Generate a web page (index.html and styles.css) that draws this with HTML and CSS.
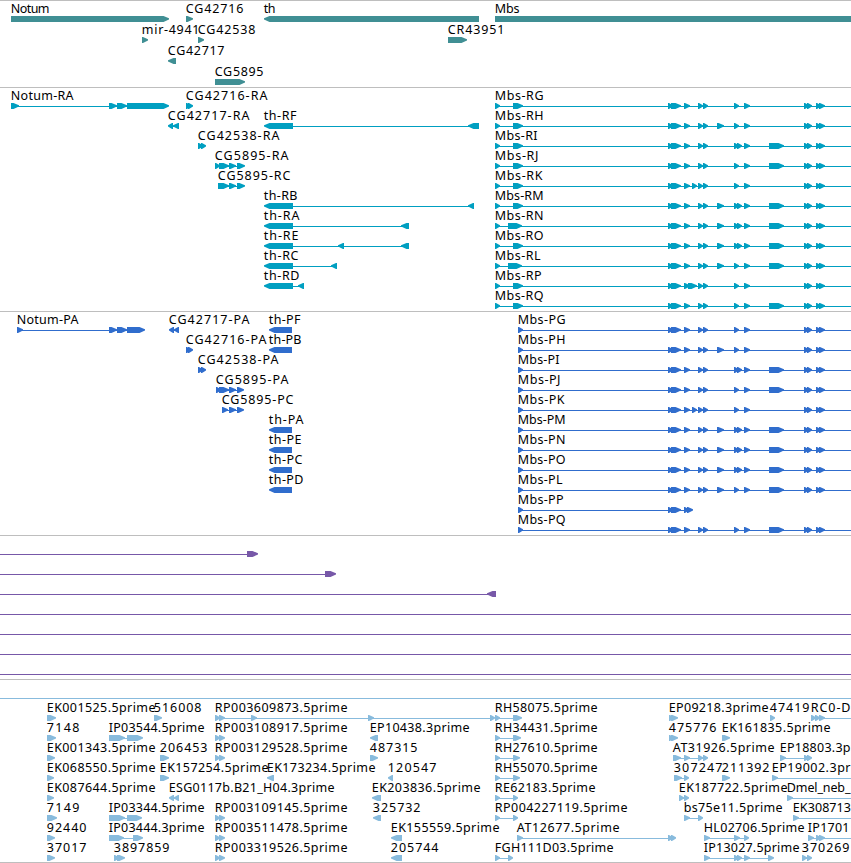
FILE: index.html
```html
<!DOCTYPE html>
<html lang="en">
<head>
<meta charset="utf-8">
<title>Genome browser</title>
<link rel="stylesheet" href="styles.css">
</head>
<body>
<main class="browser">
  <section class="track track-gene"><svg id="gene" class="canvas"></svg></section>
  <section class="track track-transcript"><svg id="transcript" class="canvas"></svg></section>
  <section class="track track-protein"><svg id="protein" class="canvas"></svg></section>
  <section class="track track-clone"><svg id="clone" class="canvas"></svg></section>
  <section class="track track-est"><svg id="est" class="canvas"></svg></section>
</main>
<script src="tracks.js"></script>
</body>
</html>
```
FILE: styles.css
```css
* {
  box-sizing: border-box;
}

body {
  margin: 0;
  background: #fff;
  overflow: hidden;
}

.browser {
  display: flex;
  flex-direction: column;
  width: 851px;
  height: 863px;
  border-bottom: 1px solid #bebebe;
}

.track {
  flex: none;
  border-top: 1px solid #bebebe;
  overflow: hidden;
}

.track-gene { height: 87px; color: #408f94; }
.track-transcript { height: 224px; color: #009fc1; }
.track-protein { height: 224px; color: #306dcd; }
.track-clone { height: 144px; color: #7758a8; }
.track-est { height: 183px; color: #88bbdd; }

.canvas {
  display: block;
  width: 100%;
  height: 100%;
}

.glyph {
  fill: currentColor;
}

.link {
  fill: currentColor;
  shape-rendering: crispEdges;
}

.label {
  fill: #000;
  font-family: "Noto Sans", "Open Sans", sans-serif;
  font-size: 12.5px;
}
```
FILE: tracks.js
```js
const NS = 'http://www.w3.org/2000/svg';
const EDGE = 860;

function add(svg, tag, attrs, text) {
  const el = document.createElementNS(NS, tag);
  for (const key in attrs) el.setAttribute(key, attrs[key]);
  if (text) el.textContent = text;
  svg.appendChild(el);
}

// Block with a pointed end in the direction of the strand.
function blockPath(a, b, y, left) {
  const tip = Math.min(5.5, b - a - 1);
  const end = y + 6;
  return left
    ? `M${b} ${y}H${a + tip}L${a} ${y + 2.2}V${y + 3.5}L${a + tip} ${end}H${b}Z`
    : `M${a} ${y}H${b - tip}L${b} ${y + 2.2}V${y + 3.5}L${b - tip} ${end}H${a}Z`;
}

// Feature: [row, label, labelEnd, blocks, options]; '<' = reverse strand, '0' = starts at the left edge, '+' = runs past the right edge.
function draw(id, top, step, features) {
  const svg = document.getElementById(id);
  for (const [row, label, labelEnd, blocks, flags = ''] of features) {
    const y = top + row * step;
    const left = flags.includes('<');
    const parts = blocks.split(' ').map(p => p.split('-').map(Number));
    const start = flags.includes('0') ? 0 : parts[0][0];
    const stop = flags.includes('+') ? EDGE : parts[parts.length - 1][1];
    if (parts.length > 1 || flags) {
      const from = left && start ? start + 4 : start;
      const to = left || flags.includes('+') ? stop : stop - 4;
      if (to > from) add(svg, 'rect', { class: 'link', x: from, y: y + 3, width: to - from, height: 1 });
    }
    for (const [a, b] of parts) {
      if (b > a) add(svg, 'path', { class: 'glyph', d: blockPath(a, b, y, left) });
    }
    if (label) {
      const x = parts[0][0] - 0.2;
      add(svg, 'text', { class: 'label', x, y: y - 3, textLength: labelEnd + 0.5 - x }, label);
    }
  }
}

draw('gene', 15, 21, [
  [0, 'Notum', 49, '11-169'],
  [1, 'mir-4941', 199, '142-148'],
  [2, 'CG42717', 224, '168-176', '<'],
  [0, 'CG42716', 243, '186-193'],
  [1, 'CG42538', 255, '198-204'],
  [3, 'CG5895', 263, '215-245'],
  [0, 'th', 275, '264-479', '<'],
  [1, 'CR43951', 504, '448-467'],
  [0, 'Mbs', 519, '495-860']
]);

// Mbs isoforms share most exons; each row lists its own extra ones.
const shared = '668-673 671-681 684-690 698-703 703-708 734-739 744-750 804-809 807-812 816-821 819-825';
const big = '769-784';
const alt = '717-724';
const twin = '737-742';
const isoforms = [
  ['G', '', 48], ['H', alt, 48], ['I', `${twin} ${big}`, 42], ['J', big, 43], ['K', '692-697', 47],
  ['M', `${alt} ${twin} ${big}`, 48], ['N', `${alt} ${twin} ${big}`, 48], ['O', `${alt} ${twin} ${big}`, 48],
  ['L', `${alt} ${big}`, 45], ['P', '688-697', 46], ['Q', big, 48]
];
const join = (...p) => p.filter(Boolean).join(' ');

draw('transcript', 15, 20, [
  [0, 'Notum-RA', 73, '11-19 109-117 117-127 127-169'],
  [0, 'CG42716-RA', 267, '186-191 188-193'],
  [1, 'CG42717-RA', 249, '168-173 173-179', '<'],
  [2, 'CG42538-RA', 279, '198-203 201-206'],
  [3, 'CG5895-RA', 288, '215-220 219-229 229-236 237-245'],
  [4, 'CG5895-RC', 290, '218-229 229-236 237-245'],
  [1, 'th-RF', 296, '264-293 468-479', '<'],
  [5, 'th-RB', 297, '264-293 468-474', '<'],
  [6, 'th-RA', 299, '264-293 401-409', '<'],
  [7, 'th-RE', 298, '264-293 338-344 401-409', '<'],
  [8, 'th-RC', 298, '264-293 331-337', '<'],
  [9, 'th-RD', 299, '264-293 298-304', '<'],
  ...isoforms.map(([n, extra, w], i) =>
    [i, 'Mbs-R' + n, 495 + w, join('495-500', n === 'N' || n === 'L' ? '508-522' : '513-523', extra, shared), '+'])
]);

draw('protein', 15, 20, [
  [0, 'Notum-PA', 78, '17-23 109-117 117-127 127-145'],
  [0, 'CG42717-PA', 249, '169-174 174-179', '<'],
  [1, 'CG42716-PA', 266, '186-191 188-193'],
  [2, 'CG42538-PA', 278, '198-203 201-206'],
  [3, 'CG5895-PA', 288, '216-221 219-229 229-236 237-244'],
  [4, 'CG5895-PC', 293, '222-228 229-236 237-244'],
  [0, 'th-PF', 300, '269-292', '<'],
  [1, 'th-PB', 301, '269-292', '<'],
  [5, 'th-PA', 303, '269-292', '<'],
  [6, 'th-PE', 301, '269-292', '<'],
  [7, 'th-PC', 302, '269-292', '<'],
  [8, 'th-PD', 303, '269-292', '<'],
  ...isoforms.map(([n, extra, w], i) => n === 'P'
    ? [i, 'Mbs-PP', 563, '518-523 668-673 671-681 684-689 687-693']
    : [i, 'Mbs-P' + n, 517 + w, join('518-523', extra, shared), '+'])
]);

draw('clone', 15, 20, [
  [0, '', 0, '247-258', '0'],
  [1, '', 0, '325-336', '0'],
  [2, '', 0, '487-496', '0<'],
  [3, '', 0, '0-0', '0+'],
  [4, '', 0, '0-0', '0+'],
  [5, '', 0, '0-0', '0+'],
  [6, '', 0, '0-0', '0+']
]);

const rp = '215-220 219-225';
draw('est', 15, 20, [
  [0, '', 0, '0-0', '0+'],
  [1, 'EK001525.5prime', 155, '47-56'],
  [1, '516008', 201, '154-162'],
  [1, 'RP003609873.5prime', 347, rp + ' 251-257 368-374 490-495'],
  [1, 'RH58075.5prime', 597, '495-500 513-522'],
  [1, 'EP09218.3prime', 768, '669-674 671-678'],
  [1, '47419', 809, '770-775'],
  [1, 'RC0-D', 850, '811-816 815-820 819-825', '+'],
  [2, '7148', 79, '47-56'],
  [2, 'IP03544.5prime', 204, '109-125 127-143'],
  [2, 'RP003108917.5prime', 347, rp],
  [2, 'EP10438.3prime', 469, '370-378', '<'],
  [2, 'RH34431.5prime', 597, '495-500 513-521'],
  [2, '475776', 716, '669-674 671-678'],
  [2, 'EK161835.5prime', 830, '722-730'],
  [3, 'EK001343.5prime', 155, '47-55'],
  [3, '206453', 207, '160-169'],
  [3, 'RP003129528.5prime', 347, rp],
  [3, '487315', 417, '370-378'],
  [3, 'RH27610.5prime', 597, '495-500 513-520'],
  [3, 'AT31926.5prime', 774, '673-681 684-690 698-703 703-708'],
  [3, 'EP18803.3p', 850, '780-786 804-809 807-812'],
  [4, 'EK068550.5prime', 155, '47-54'],
  [4, 'EK157254.5prime', 268, '160-169'],
  [4, 'EK173234.5prime', 375, '267-274', '<'],
  [4, '120547', 436, '388-393', '<'],
  [4, 'RH55070.5prime', 597, '495-500 513-520'],
  [4, '307247', 722, '674-682 684-689'],
  [4, '211392', 769, '722-730'],
  [4, 'EP19002.3pr', 850, '772-778', '+'],
  [5, 'EK087644.5prime', 155, '47-54'],
  [5, 'ESG0117b.B21_H04.3prime', 334, '169-174 174-179', '<'],
  [5, 'EK203836.5prime', 480, '372-381', '<'],
  [5, 'RE62183.5prime', 595, '495-500 513-518'],
  [5, 'EK187722.5prime', 787, '679-684 684-689'],
  [5, 'Dmel_neb_', 850, '787-793', '+'],
  [6, '7149', 79, '47-57'],
  [6, 'IP03344.5prime', 204, '109-125 127-142'],
  [6, 'RP003109145.5prime', 347, rp],
  [6, '325732', 420, '373-381', '<'],
  [6, 'RP004227119.5prime', 627, '495-500 513-518'],
  [6, 'bs75e11.5prime', 782, '684-690 698-703'],
  [6, 'EK308713', 850.5, '793-799', '+'],
  [7, '92440', 86, '47-55'],
  [7, 'IP03444.3prime', 204, '109-124 133-143'],
  [7, 'RP003511478.5prime', 347, rp],
  [7, 'EK155559.5prime', 499, '391-402', '<'],
  [7, 'AT12677.5prime', 619, '517-523 668-673 671-676'],
  [7, 'HL02706.5prime', 804, '704-710 734-740 744-749'],
  [7, 'IP1701', 849, '808-814 816-821 819-825', '+'],
  [8, '37017', 86, '47-55'],
  [8, '3897859', 169, '114-119 117-125'],
  [8, 'RP003319526.5prime', 347, rp],
  [8, '205744', 438, '391-402', '<'],
  [8, 'FGH111D03.5prime', 613, '495-500 508-513'],
  [8, 'IP13027.5prime', 799, '704-710 734-739 737-742 744-750 768-774'],
  [8, '370269', 849, '802-807 807-812']
]);
```
